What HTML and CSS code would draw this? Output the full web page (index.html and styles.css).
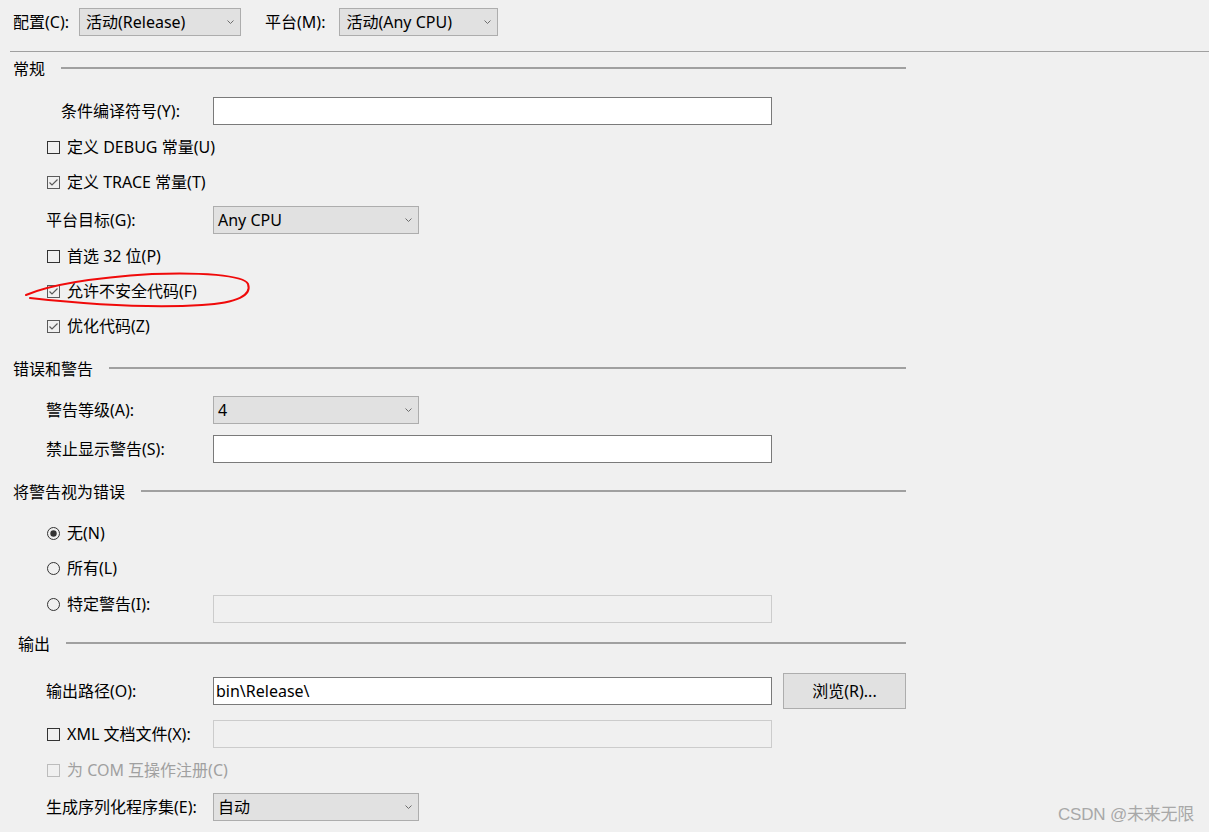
FILE: index.html
```html
<!DOCTYPE html>
<html lang="zh-CN">
<head>
<meta charset="utf-8">
<title>生成</title>
<link rel="stylesheet" href="styles.css">
</head>
<body>
<div class="page">
  <div class="topbar">
    <span class="top-label">配置(C):</span>
    <div class="select top-select sel-config"><span>活动(Release)</span><svg class="chev" width="7" height="4" viewBox="0 0 7 4"><path d="M0.5 0.5 L3.5 3.5 L6.5 0.5" /></svg></div>
    <span class="top-label platform-label">平台(M):</span>
    <div class="select top-select sel-platform"><span>活动(Any CPU)</span><svg class="chev" width="7" height="4" viewBox="0 0 7 4"><path d="M0.5 0.5 L3.5 3.5 L6.5 0.5" /></svg></div>
  </div>
  <div class="top-rule"></div>

  <div class="form">
    <div class="section-head mt-3"><span class="head-text">常规</span><i class="rule"></i></div>

    <div class="row mt-14">
      <span class="label indent">条件编译符号(Y):</span>
      <div class="input wide"></div>
    </div>

    <div class="row mt-8">
      <span class="check"><svg class="box" width="13" height="13" viewBox="0 0 13 13"><rect x="0.5" y="0.5" width="12" height="12"/></svg>定义 DEBUG 常量(U)</span>
    </div>
    <div class="row mt-7">
      <span class="check"><svg class="box checked" width="13" height="13" viewBox="0 0 13 13"><rect x="0.5" y="0.5" width="12" height="12"/><path d="M2.5 6.5 L5 9 L10.5 3.5"/></svg>定义 TRACE 常量(T)</span>
    </div>

    <div class="row mt-10">
      <span class="label">平台目标(G):</span>
      <div class="select narrow"><span>Any CPU</span><svg class="chev" width="7" height="4" viewBox="0 0 7 4"><path d="M0.5 0.5 L3.5 3.5 L6.5 0.5" /></svg></div>
    </div>

    <div class="row mt-8">
      <span class="check"><svg class="box" width="13" height="13" viewBox="0 0 13 13"><rect x="0.5" y="0.5" width="12" height="12"/></svg>首选 32 位(P)</span>
    </div>
    <div class="row mt-7">
      <span class="check"><svg class="box checked" width="13" height="13" viewBox="0 0 13 13"><rect x="0.5" y="0.5" width="12" height="12"/><path d="M2.5 6.5 L5 9 L10.5 3.5"/></svg>允许不安全代码(F)</span>
    </div>
    <div class="row mt-7">
      <span class="check"><svg class="box checked" width="13" height="13" viewBox="0 0 13 13"><rect x="0.5" y="0.5" width="12" height="12"/><path d="M2.5 6.5 L5 9 L10.5 3.5"/></svg>优化代码(Z)</span>
    </div>

    <div class="section-head mt-15"><span class="head-text">错误和警告</span><i class="rule"></i></div>

    <div class="row mt-13">
      <span class="label">警告等级(A):</span>
      <div class="select narrow"><span>4</span><svg class="chev" width="7" height="4" viewBox="0 0 7 4"><path d="M0.5 0.5 L3.5 3.5 L6.5 0.5" /></svg></div>
    </div>
    <div class="row mt-11">
      <span class="label">禁止显示警告(S):</span>
      <div class="input wide"></div>
    </div>

    <div class="section-head mt-15"><span class="head-text">将警告视为错误</span><i class="rule"></i></div>

    <div class="row mt-13">
      <span class="check"><svg class="radio" width="13" height="13" viewBox="0 0 13 13"><circle cx="6.5" cy="6.5" r="6"/><circle class="dot" cx="6.5" cy="6.5" r="3.2"/></svg>无(N)</span>
    </div>
    <div class="row mt-7">
      <span class="check"><svg class="radio" width="13" height="13" viewBox="0 0 13 13"><circle cx="6.5" cy="6.5" r="6"/></svg>所有(L)</span>
    </div>
    <div class="row mt-13">
      <span class="check labelled raised"><svg class="radio" width="13" height="13" viewBox="0 0 13 13"><circle cx="6.5" cy="6.5" r="6"/></svg>特定警告(I):</span>
      <div class="input wide disabled"></div>
    </div>

    <div class="section-head mt-7 out"><span class="head-text">输出</span><i class="rule"></i></div>

    <div class="row mt-19">
      <span class="label">输出路径(O):</span>
      <div class="input wide"><span>bin\Release\</span></div>
      <div class="button">浏览(R)...</div>
    </div>
    <div class="row mt-15">
      <span class="check labelled"><svg class="box" width="13" height="13" viewBox="0 0 13 13"><rect x="0.5" y="0.5" width="12" height="12"/></svg>XML 文档文件(X):</span>
      <div class="input wide disabled"></div>
    </div>
    <div class="row mt-8">
      <span class="check is-disabled"><svg class="box" width="13" height="13" viewBox="0 0 13 13"><rect x="0.5" y="0.5" width="12" height="12"/></svg>为 COM 互操作注册(C)</span>
    </div>
    <div class="row mt-9">
      <span class="label">生成序列化程序集(E):</span>
      <div class="select narrow"><span>自动</span><svg class="chev" width="7" height="4" viewBox="0 0 7 4"><path d="M0.5 0.5 L3.5 3.5 L6.5 0.5" /></svg></div>
    </div>
  </div>

  <svg class="annotation" width="260" height="50" viewBox="0 0 260 50">
    <path d="M2 24 C 30 12, 80 6, 128 3 C 175 1, 220 4, 224 13 C 228 24, 214 32, 178 34 C 130 37, 70 34, 6 27" />
  </svg>

  <div class="watermark">CSDN @未来无限</div>
</div>
</body>
</html>
```

FILE: styles.css
```css
html, body {
  margin: 0;
  padding: 0;
  background: #f0f0f0;
}

body {
  font-family: "Noto Sans", "Noto Sans CJK SC", sans-serif;
  font-size: 16px;
  line-height: 20px;
  color: #000;
}

.page {
  position: relative;
  width: 1209px;
  height: 832px;
  overflow: hidden;
}

/* ---------- top bar ---------- */
.topbar {
  display: flex;
  align-items: center;
  padding: 8px 0 0 13px;
  height: 27px;
}

.top-label {
  margin-right: 10px;
  white-space: nowrap;
}

.platform-label {
  margin-left: 24px;
  margin-right: 14px;
}

.top-rule {
  margin: 16px 0 0 10px;
  height: 1px;
  background: #a0a0a0;
}

/* ---------- selects / inputs ---------- */
.select {
  box-sizing: border-box;
  height: 28px;
  display: flex;
  align-items: center;
  justify-content: space-between;
  padding: 0 6px 0 4px;
  background: #e1e1e1;
  border: 1px solid #adadad;
  white-space: nowrap;
}

.top-select {
  height: 28px;
  padding-left: 6px;
}

.sel-config { width: 162px; }
.sel-platform { width: 159px; }

.select.narrow { width: 206px; }

.chev path {
  fill: none;
  stroke: #6d6d6d;
  stroke-width: 1;
}

.input {
  box-sizing: border-box;
  height: 28px;
  background: #fff;
  border: 1px solid #7a7a7a;
  display: flex;
  align-items: center;
  padding-left: 2px;
}

.input.wide { width: 559px; }

.input.disabled {
  background: #f0f0f0;
  border-color: #cccccc;
}

.button {
  box-sizing: border-box;
  width: 123px;
  height: 36px;
  margin-left: 11px;
  background: #e1e1e1;
  border: 1px solid #adadad;
  display: flex;
  align-items: center;
  justify-content: center;
}

/* ---------- form ---------- */
.form {
  width: 906px;
}

.section-head {
  display: flex;
  align-items: center;
  height: 28px;
  padding-left: 13px;
}

.section-head.out {
  padding-left: 18px;
}

.head-text {
  margin-right: 16px;
  white-space: nowrap;
}

.rule {
  flex: 1;
  height: 2px;
  margin-bottom: 3px;
  background: #a0a0a0;
}

.row {
  display: flex;
  align-items: center;
  height: 28px;
  padding-left: 46px;
}

.label {
  box-sizing: border-box;
  width: 167px;
  flex: none;
  white-space: nowrap;
}

.label.indent {
  padding-left: 15px;
}

.check {
  display: flex;
  align-items: center;
  gap: 7px;
  margin-left: 1px;
  white-space: nowrap;
}

.check.labelled {
  box-sizing: border-box;
  width: 166px;
  flex: none;
}

.check.raised {
  padding-bottom: 10px;
}

.box rect {
  fill: none;
  stroke: #333;
  stroke-width: 1;
}

.box.checked rect {
  stroke: #5a5a5a;
}

.box path {
  fill: none;
  stroke: #5a5a5a;
  stroke-width: 1.2;
}

.radio circle {
  fill: none;
  stroke: #333;
  stroke-width: 1;
}

.radio circle.dot {
  fill: #333;
  stroke: none;
}

.check.is-disabled {
  color: #a0a0a0;
}

.check.is-disabled .box rect {
  stroke: #bcbcbc;
}

/* spacing */
.mt-3 { margin-top: 3px; }
.mt-7 { margin-top: 7px; }
.mt-8 { margin-top: 8px; }
.mt-9 { margin-top: 9px; }
.mt-10 { margin-top: 10px; }
.mt-11 { margin-top: 11px; }
.mt-13 { margin-top: 13px; }
.mt-14 { margin-top: 14px; }
.mt-15 { margin-top: 15px; }
.mt-19 { margin-top: 19px; }

/* ---------- overlays ---------- */
.annotation {
  position: absolute;
  left: 24px;
  top: 271px;
}

.annotation path {
  fill: none;
  stroke: #f00a0a;
  stroke-width: 2;
  stroke-linecap: round;
}

.watermark {
  position: absolute;
  left: 1058px;
  top: 805px;
  font-family: "Liberation Sans", "Noto Sans CJK SC", sans-serif;
  font-size: 17px;
  letter-spacing: -0.2px;
  color: #a8a8a8;
  white-space: nowrap;
}
```
